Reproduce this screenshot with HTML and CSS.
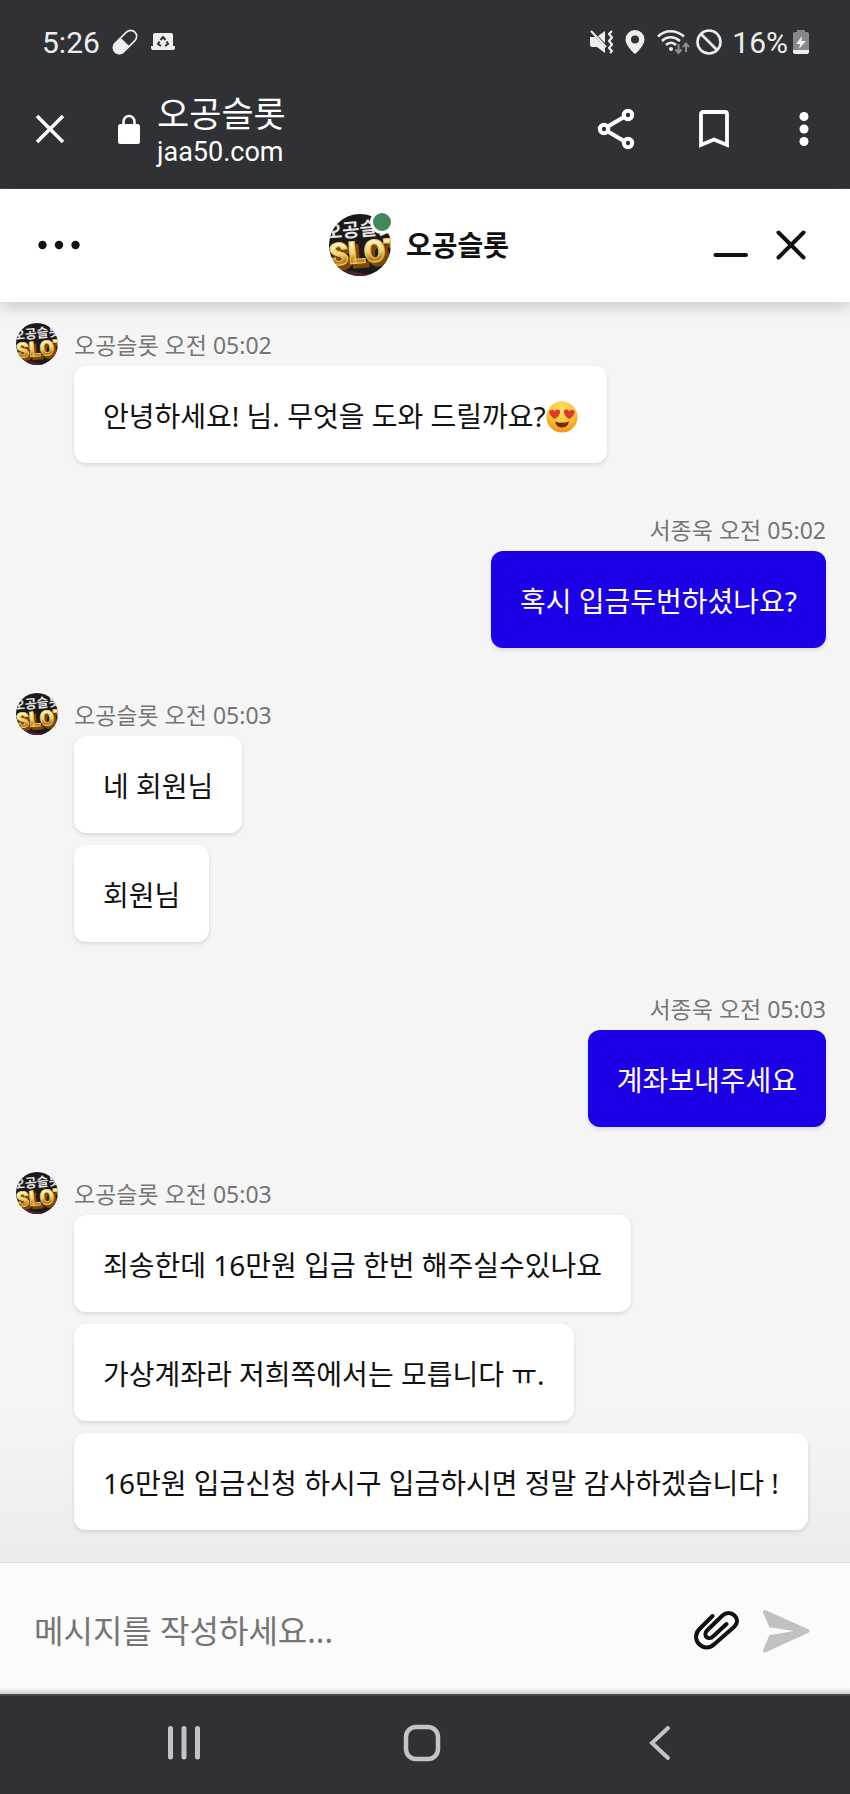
FILE: index.html
```html
<!DOCTYPE html>
<html lang="ko">

<head>
    <meta charset="UTF-8" />
    <title>오공슬롯</title>
    <meta name="viewport" content="width=device-width, initial-scale=1" />
    <link rel="stylesheet" href="styles.css">
</head>

<body>
    <!-- Shared symbols -->
    <svg class="symbols" aria-hidden="true">
        <defs>
            <linearGradient id="gold" x1="0" y1="0" x2="0" y2="1">
                <stop offset="0.15" stop-color="#fffbe0" />
                <stop offset="0.5" stop-color="#f5d272" />
                <stop offset="0.7" stop-color="#b87818" />
                <stop offset="1" stop-color="#ffe58a" />
            </linearGradient>
            <clipPath id="round">
                <circle cx="31" cy="31" r="31" />
            </clipPath>
            <symbol id="avatar" viewBox="0 0 62 62">
                <g clip-path="url(#round)">
                    <rect width="62" height="62" fill="#1d191b" />
                    <path d="M8 54 L46 62 H16 Z" fill="#4a2035" />
                    <g transform="rotate(-5 31 31)">
                        <text class="logo-ko" x="-3" y="22">오공슬롯</text>
                        <text class="logo-en logo-shade" x="2" y="53">SLOT</text>
                        <text class="logo-en" x="-1" y="49">SLOT</text>
                    </g>
                </g>
            </symbol>
        </defs>
    </svg>

    <div class="browser">
        <div class="status">
            <span class="clock">5:26</span>
            <svg class="pill" width="26" height="26" viewBox="0 0 26 26">
                <g transform="rotate(45 13 13)">
                    <rect x="7" y="-1" width="12" height="28" rx="6" fill="none" stroke="#eee" stroke-width="1.6" />
                    <path d="M6.500 13 H19.500 V21 a6.500 6.500 0 0 1 -13 0 Z" fill="#eee" />
                </g>
            </svg>
            <svg width="26" height="20" viewBox="0 0 26 20">
                <path d="M5 1 H21 a2 2 0 0 1 2 2 V14 H25 V16 a2 2 0 0 1 -2 2 H3 a2 2 0 0 1 -2 -2 V14 H3 V3 a2 2 0 0 1 2 -2 Z" fill="#eee" />
                <path d="M10.500 8 L13 5 L15.500 8 M16.500 9.500 L18 12 L15 14 M11 14 L8 12 L9.500 9.500" fill="none" stroke="#303135" stroke-width="2" />
            </svg>

            <div class="status-right">
                <svg width="25" height="26" viewBox="0 0 25 26">
                    <path d="M1 8 H6 L16 18 V24 L8 18 H3 a2 2 0 0 1 -2 -2 Z M9 7 L16 2 V14 Z" fill="#eee" />
                    <path d="M2 2 L17 18" stroke="#eee" stroke-width="2" />
                    <path d="M23 2 L20 5 L23 8.500 L20 12 L23 15.500 L20 19 L23 22 L21 24" fill="none" stroke="#eee" stroke-width="2.200" stroke-linejoin="round" />
                </svg>
                <svg class="pin" width="20" height="26" viewBox="0 0 20 26">
                    <path d="M10 1 a9.500 9.500 0 0 1 9.500 9.500 C19.500 17 10 25 10 25 S0.500 17 0.500 10.500 A9.500 9.500 0 0 1 10 1 Z M10 6.500 a4 4 0 1 0 0 8 a4 4 0 1 0 0 -8 Z" fill="#eee" fill-rule="evenodd" />
                </svg>
                <svg width="34" height="26" viewBox="0 0 34 26">
                    <g fill="none" stroke="#eee" stroke-width="2.600">
                        <path d="M2 7.500 C9 0.500 20 0.500 28 7.500" />
                        <path d="M6 12 C11 7 18 7 24 12" />
                        <path d="M10 16 C13 13 17 13 20 16" />
                    </g>
                    <circle cx="15" cy="20" r="2" fill="#eee" />
                    <path d="M22.500 15 V23 M19.500 20.500 L22.500 24 L25.500 20.500 M30 23 V15 M27 18 L30 14.500 L33 18" fill="none" stroke="#8b8c8e" stroke-width="2" />
                </svg>
                <svg width="26" height="26" viewBox="0 0 26 26" fill="none" stroke="#eee" stroke-width="2.600">
                    <circle cx="13" cy="13" r="11.500" />
                    <path d="M5 5 L21 21" />
                </svg>
                <span class="percent">16%</span>
                <svg width="18" height="26" viewBox="0 0 18 26">
                    <path d="M5 3 V1 H13 V3 H15 a2 2 0 0 1 2 2 V21 H1 V5 a2 2 0 0 1 2 -2 Z" fill="#86878a" />
                    <path d="M1 21 H17 V23 a2 2 0 0 1 -2 2 H3 a2 2 0 0 1 -2 -2 Z" fill="#eee" />
                    <path d="M10 7 L4 15 H8 L7 20 L14 12 H9.500 Z" fill="#eee" />
                </svg>
            </div>
        </div>

        <div class="toolbar">
            <button class="icon-btn" aria-label="닫기">
                <svg width="30" height="30" viewBox="0 0 30 30" fill="none" stroke="#fff" stroke-width="3.500">
                    <path d="M2 2 L28 28 M28 2 L2 28" />
                </svg>
            </button>
            <svg class="lock" width="24" height="30" viewBox="0 0 24 30">
                <rect x="1" y="10" width="22" height="20" rx="2.500" fill="#fff" />
                <path d="M6.500 12 V7.500 a5.500 5.500 0 0 1 11 0 V12" fill="none" stroke="#fff" stroke-width="2.500" />
            </svg>
            <div class="site">
                <div class="site-title">오공슬롯</div>
                <div class="site-url">jaa50.com</div>
            </div>
            <div class="tools">
                <button class="icon-btn" aria-label="공유">
                    <svg width="38" height="42" viewBox="0 0 38 42" fill="none" stroke="#fff" stroke-width="4">
                        <path d="M10 19 L27 9 M10 23 L27 33" />
                        <circle cx="7" cy="21" r="4.200" />
                        <circle cx="31" cy="7" r="4.200" />
                        <circle cx="31" cy="35" r="4.200" />
                    </svg>
                </button>
                <button class="icon-btn" aria-label="북마크">
                    <svg width="30" height="38" viewBox="0 0 30 38" fill="none" stroke="#fff" stroke-width="3.800">
                        <path d="M2 35 V4 a2 2 0 0 1 2 -2 H26 a2 2 0 0 1 2 2 V35 L15 29.500 Z" />
                    </svg>
                </button>
                <button class="icon-btn more" aria-label="더보기">
                    <svg width="10" height="34" viewBox="0 0 10 34" fill="#fff">
                        <circle cx="5" cy="4.500" r="4.500" />
                        <circle cx="5" cy="17" r="4.500" />
                        <circle cx="5" cy="29.500" r="4.500" />
                    </svg>
                </button>
            </div>
        </div>
    </div>

    <header class="chat-header">
        <button class="icon-btn menu" aria-label="메뉴">
            <svg width="42" height="10" viewBox="0 0 42 10" fill="#111">
                <circle cx="4.500" cy="5" r="4.200" />
                <circle cx="21" cy="5" r="4.200" />
                <circle cx="37.500" cy="5" r="4.200" />
            </svg>
        </button>
        <div class="agent">
            <div class="agent-photo">
                <svg width="62" height="62"><use href="#avatar" /></svg>
                <span class="online"></span>
            </div>
            <h1>오공슬롯</h1>
        </div>
        <div class="window-btns">
            <button class="icon-btn" aria-label="최소화">
                <svg width="36" height="30" viewBox="0 0 36 30" stroke="#111" stroke-width="4" stroke-linecap="round">
                    <path d="M2.500 25 H33" />
                </svg>
            </button>
            <button class="icon-btn" aria-label="채팅 닫기">
                <svg width="30" height="30" viewBox="0 0 30 30" stroke="#111" stroke-width="4" stroke-linecap="round">
                    <path d="M2.500 2.500 L27.500 27.500 M27.500 2.500 L2.500 27.500" />
                </svg>
            </button>
        </div>
    </header>

    <main class="messages">
        <section class="group">
            <div class="meta">
                <svg class="avatar" width="42" height="42"><use href="#avatar" /></svg>
                <span>오공슬롯 오전 05:02</span>
            </div>
            <p class="bubble">안녕하세요! 님. 무엇을 도와 드릴까요?<svg class="emoji" width="32" height="32" viewBox="0 0 32 32" role="img" aria-label="하트 눈 얼굴">
                    <defs>
                        <radialGradient id="face" cx="0.5" cy="0.3" r="0.7">
                            <stop offset="0" stop-color="#ffe36a" />
                            <stop offset="0.6" stop-color="#fcc433" />
                            <stop offset="1" stop-color="#ee8f1c" />
                        </radialGradient>
                    </defs>
                    <circle cx="16" cy="16" r="15.500" fill="url(#face)" />
                    <path d="M9 18 C5 16 2 12 4 9.500 C6 8 8 9 9 10.500 C10 8 13 8 14 10 C14.500 13 12 16 9 18 Z M23 18 C20 16 17.500 13 18 10 C19 8 22 8 23 10.500 C24 9 26 8 28 9.500 C30 12 27 16 23 18 Z" fill="#dc3a2c" />
                    <path d="M9 20.500 Q16 23 23 20.500 Q22 26.500 16 26.500 Q10 26.500 9 20.500 Z" fill="#6b2a16" />
                </svg></p>
        </section>

        <section class="group mine">
            <div class="meta">서종욱 오전 05:02</div>
            <p class="bubble">혹시 입금두번하셨나요?</p>
        </section>

        <section class="group">
            <div class="meta">
                <svg class="avatar" width="42" height="42"><use href="#avatar" /></svg>
                <span>오공슬롯 오전 05:03</span>
            </div>
            <p class="bubble">네 회원님</p>
            <p class="bubble">회원님</p>
        </section>

        <section class="group mine">
            <div class="meta">서종욱 오전 05:03</div>
            <p class="bubble">계좌보내주세요</p>
        </section>

        <section class="group">
            <div class="meta">
                <svg class="avatar" width="42" height="42"><use href="#avatar" /></svg>
                <span>오공슬롯 오전 05:03</span>
            </div>
            <p class="bubble">죄송한데 16만원 입금 한번 해주실수있나요</p>
            <p class="bubble">가상계좌라 저희쪽에서는 모릅니다 ㅠ.</p>
            <p class="bubble">16만원 입금신청 하시구 입금하시면 정말 감사하겠습니다 !</p>
        </section>
    </main>

    <form class="composer">
        <input type="text" aria-label="메시지" placeholder="메시지를 작성하세요..." />
        <button class="icon-btn" type="button" aria-label="파일 첨부">
            <svg width="46" height="42" viewBox="0 0 46 42" fill="none" stroke="#111" stroke-width="4" stroke-linecap="round" stroke-linejoin="round">
                <path d="M18.500 6 L5.500 19 C1 23.500 1 30 5 34 C9.500 38.500 16 38.500 20.500 34 L40 17 C44 13 44 9 40.500 5.500 C37 2 32 2 28.500 5.500 L13 20.500 C11 22.500 11 25.500 12.500 27 C14 28.500 17 28.500 19 26.500 L32.500 14" />
            </svg>
        </button>
        <button class="icon-btn" type="submit" aria-label="보내기">
            <svg width="48" height="44" viewBox="0 0 48 44">
                <path d="M3 3 L45.500 22 L3 41.500 L9 27.500 L34 22 L9 17 Z" fill="#c1c1c1" stroke="#c1c1c1" stroke-width="4" stroke-linejoin="round" />
                <path d="M9 18.500 L32 22 L9 26 Z" fill="#fbfbfb" />
            </svg>
        </button>
    </form>

    <nav class="navbar">
        <button class="icon-btn" aria-label="최근 앱">
            <svg width="36" height="38" viewBox="0 0 36 38" stroke="#c4c4c6" stroke-width="5" stroke-linecap="round">
                <path d="M4.500 4.500 V33 M18 4.500 V33 M31.500 4.500 V33" />
            </svg>
        </button>
        <button class="icon-btn" aria-label="홈">
            <svg width="38" height="38" viewBox="0 0 38 38" fill="none" stroke="#c4c4c6" stroke-width="4.500">
                <rect x="3" y="3" width="32" height="32" rx="10" />
            </svg>
        </button>
        <button class="icon-btn" aria-label="뒤로">
            <svg width="30" height="38" viewBox="0 0 30 38" fill="none" stroke="#c4c4c6" stroke-width="4" stroke-linecap="round">
                <path d="M26 4 L10 19 L26 34" />
            </svg>
        </button>
    </nav>
</body>

</html>
```
FILE: styles.css
```css
* {
    box-sizing: border-box;
}

body {
    margin: 0;
    min-height: 100vh;
    display: flex;
    flex-direction: column;
    font-family: "Noto Sans", "Noto Sans CJK KR", sans-serif;
    background: #f5f5f5;
    color: #111;
}

svg {
    display: block;
    flex-shrink: 0;
}

.symbols {
    position: absolute;
    width: 0;
    height: 0;
}

.icon-btn {
    padding: 0;
    border: none;
    background: none;
    cursor: pointer;
}

/* Logo lettering inside the avatar */
.logo-ko {
    font: 700 19px "Noto Sans CJK KR", sans-serif;
    fill: #e4e4e6;
}

.logo-en {
    font: 900 31px Roboto, sans-serif;
    fill: url(#gold);
    stroke: #f0c95c;
    stroke-width: 1;
}

.logo-shade {
    fill: #7a4a0c;
    stroke: #7a4a0c;
    stroke-width: 2;
}

/* Phone status bar and browser toolbar */
.browser {
    background: #303135;
    color: #fff;
    border-bottom: 1px solid #47444a;
}

.status {
    display: flex;
    align-items: center;
    gap: 12px;
    height: 84px;
    padding: 0 40px 0 42px;
    font-family: Roboto, sans-serif;
    font-size: 30px;
    color: #eee;
}

.status-right {
    display: flex;
    align-items: center;
    gap: 6px;
    margin-left: auto;
}

.percent {
    margin: 0 -2px 0 4px;
}

.pin {
    margin: 0 5px;
}

.toolbar {
    display: flex;
    align-items: center;
    height: 104px;
    padding: 0 41px 14px 35px;
}

.toolbar > .lock {
    margin: 0 16px 0 52px;
}

.site {
    padding-top: 4px;
}

.site-title {
    font-size: 35px;
    line-height: 42px;
}

.site-url {
    font-family: Roboto, sans-serif;
    font-size: 27px;
    line-height: 34px;
}

.tools {
    display: flex;
    align-items: center;
    gap: 64px;
    margin-left: auto;
}

.more {
    margin-left: 6px;
}

/* Chat header */
.chat-header {
    position: relative;
    display: grid;
    grid-template-columns: 1fr auto 1fr;
    align-items: center;
    height: 113px;
    padding: 0 44px 2px 38px;
    background: #fff;
    box-shadow: 0 4px 16px rgba(0, 0, 0, 0.2);
}

.menu {
    justify-self: start;
}

.agent {
    display: flex;
    align-items: center;
    gap: 15px;
    padding-right: 6px;
}

.agent-photo {
    position: relative;
}

.online {
    position: absolute;
    top: -4px;
    right: -3px;
    width: 24px;
    height: 24px;
    border: 3px solid #fff;
    border-radius: 50%;
    background: #43885a;
}

h1 {
    margin: 0;
    font-size: 28px;
    line-height: 40px;
}

.window-btns {
    display: flex;
    justify-self: end;
    gap: 27px;
}

/* Messages */
.messages {
    flex: 1;
    display: flex;
    flex-direction: column;
    gap: 45px;
    padding: 21px 24px 31px 16px;
    background: linear-gradient(#f5f5f5 88%, #ececec);
}

.group {
    display: flex;
    flex-direction: column;
    align-items: flex-start;
    gap: 12px;
    padding-left: 58px;
}

.meta {
    display: flex;
    align-items: center;
    gap: 16px;
    height: 42px;
    margin: 0 0 -11px -58px;
    font-size: 23px;
    color: #757575;
}

.bubble {
    margin: 0;
    padding: 30px 29px 26px;
    border-radius: 12px;
    background: #fff;
    box-shadow: 0 2px 4px rgba(0, 0, 0, 0.12);
    font-size: 28px;
    line-height: 41px;
}

.emoji {
    display: inline-block;
    vertical-align: -6px;
}

.mine {
    align-items: flex-end;
    padding-left: 0;
}

.mine .meta {
    margin-left: 0;
}

.mine .bubble {
    background: #1c00e6;
    color: #fff;
}

/* Message box */
.composer {
    display: flex;
    align-items: center;
    gap: 22px;
    height: 132px;
    padding: 4px 40px 0 34px;
    border-top: 1px solid #dedede;
    background: linear-gradient(#fbfbfb 95%, #d0d0d0);
}

.composer input {
    flex: 1;
    min-width: 0;
    padding: 0;
    border: none;
    outline: none;
    background: none;
    font: inherit;
    font-size: 32px;
    color: #111;
}

.composer input::placeholder {
    color: #757575;
}

/* Phone navigation bar */
.navbar {
    display: flex;
    align-items: center;
    justify-content: space-between;
    height: 100px;
    padding: 0 178px 4px 166px;
    border-top: 2px solid #444746;
    background: #303135;
}
```
